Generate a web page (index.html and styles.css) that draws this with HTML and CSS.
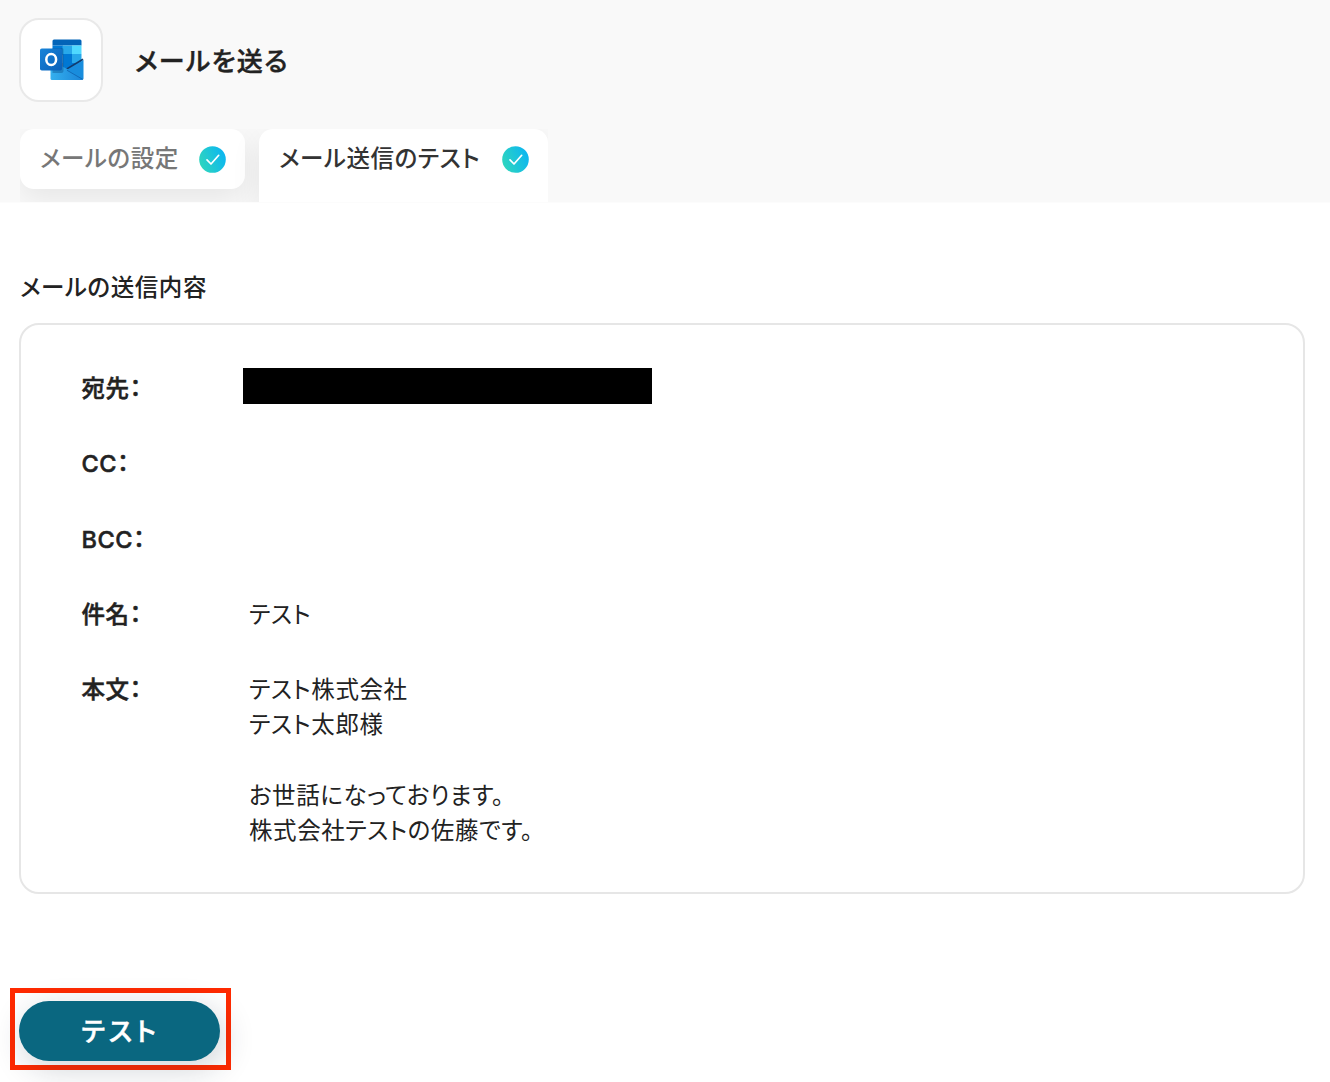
FILE: index.html
```html
<!DOCTYPE html>
<html lang="ja">
<head>
<meta charset="utf-8">
<title>メールを送る</title>
<link rel="stylesheet" href="styles.css">
</head>
<body>
<header class="header">
  <div class="title-row">
    <div class="app-icon">
      <svg width="44" height="42" viewBox="0 0 44 42">
        <defs>
          <linearGradient id="badge" x1="0" y1="0" x2="1" y2="1"><stop offset="0" stop-color="#1784d9"/><stop offset="1" stop-color="#0a5fb8"/></linearGradient>
          <linearGradient id="flap" x1="0" y1="0" x2="1" y2="0"><stop offset="0" stop-color="#35b0ee"/><stop offset="1" stop-color="#1a84d8"/></linearGradient>
          <clipPath id="cover"><path d="M12.5 2a1.5 1.5 0 0 1 1.500-1.500H40a1.500 1.500 0 0 1 1.500 1.500V32H12.500Z"/></clipPath>
        </defs>
        <g clip-path="url(#cover)">
          <path fill="#0364b8" d="M12 0h30v6.500H12z"/>
          <path fill="#0078d4" d="M12 6.500h11v9H12zM22.500 15h9.500v9h-9.500z"/>
          <path fill="#28a8ea" d="M22.500 6.500h9.500V15h-9.500zM32 15h10v9H32z"/>
          <path fill="#50d9ff" d="M32 6.500h10V15H32z"/>
          <path fill="#0364b8" d="M12 15h10.500v9H12z"/>
          <path fill="#0078d4" d="M22.500 24h19v8h-19z"/>
          <path fill="#14447d" d="M12 24h10.500v8H12z"/>
        </g>
        <path fill="#123b6d" d="M42.500 19.500 43.500 21 29 31l-3-1.500Z"/>
        <path fill="url(#flap)" d="M10.500 21.500 43 38v1.500a1.500 1.500 0 0 1-1.500 1.500H12a1.500 1.500 0 0 1-1.500-1.500Z"/>
        <path fill="#198ddd" d="M43.500 21v18.500a1.500 1.500 0 0 1-.5 1.100L26.500 31Z"/>
        <path fill="none" stroke="#0f62ae" stroke-width=".8" d="M27 31.300 43 40.500"/>
        <path fill="#07427a" opacity=".35" d="M12.500 9H22a1.500 1.500 0 0 1 1.500 1.500v21.500a2 2 0 0 1-2 2h-9Z"/>
        <rect y="9.500" width="22" height="22" rx="1.800" fill="url(#badge)"/>
        <ellipse cx="11.200" cy="20.500" rx="4.900" ry="5.500" fill="none" stroke="#fff" stroke-width="2.500"/>
      </svg>
    </div>
    <h1 class="title">メールを送る</h1>
  </div>
  <nav class="tabs">
    <a class="tab tab-idle"><span>メールの設定</span>
      <svg class="check" viewBox="0 0 27 27"><defs><linearGradient id="ok" x1="0" y1=".7" x2="1" y2=".3"><stop offset="0" stop-color="#2fd6bd"/><stop offset="1" stop-color="#0bb5f2"/></linearGradient></defs><circle cx="13.500" cy="13.500" r="13.300" fill="url(#ok)"/><path d="m8 13.800 4 4.200 7.700-8.700" fill="none" stroke="#fff" stroke-width="1.700" stroke-linecap="round" stroke-linejoin="round"/></svg></a>
    <a class="tab tab-active"><span>メール送信のテスト</span>
      <svg class="check" viewBox="0 0 27 27"><circle cx="13.500" cy="13.500" r="13.300" fill="url(#ok)"/><path d="m8 13.800 4 4.200 7.700-8.700" fill="none" stroke="#fff" stroke-width="1.700" stroke-linecap="round" stroke-linejoin="round"/></svg></a>
  </nav>
</header>
<main class="main">
  <h2 class="section-title">メールの送信内容</h2>
  <dl class="card">
    <dt>宛先：</dt><dd><span class="redacted"></span></dd>
    <dt>CC：</dt><dd></dd>
    <dt>BCC：</dt><dd></dd>
    <dt>件名：</dt><dd>テスト</dd>
    <dt>本文：</dt><dd>テスト株式会社<br>テスト太郎様<br><br>お世話になっております。<br>株式会社テストの佐藤です。</dd>
  </dl>
  <div class="highlight"><button class="button">テスト</button></div>
</main>
</body>
</html>
```
FILE: styles.css
```css
* { box-sizing: border-box; }
body {
  margin: 0;
  height: 1082px;
  overflow: hidden;
  background: #fff;
  color: #222;
  font-family: Inter, "Noto Sans CJK JP", sans-serif;
  font-size: 23.5px;
  letter-spacing: .58px;
  font-feature-settings: "palt";
}
h1, h2, dl, dd { margin: 0; }
.header { height: 203px; padding: 18px 20px 0; background: #f9f9f9; border-bottom: 1px solid #fcfcfc; }
.title-row { display: flex; align-items: center; gap: 32px; }
.app-icon {
  width: 84px; height: 84px; margin-left: -1px; padding-left: 1px;
  display: flex; align-items: center; justify-content: center;
  background: #fff; border: 2px solid #e9e9e9; border-radius: 20px;
}
.title { padding-top: 4px; font-size: 26px; font-weight: 500; line-height: 40px; letter-spacing: 1.3px; -webkit-text-stroke: .4px; }
.tabs { display: flex; align-items: flex-start; gap: 14px; width: 528px; height: 73px; margin-top: 27px; overflow: hidden; }
.tab { display: flex; justify-content: space-between; align-items: center; height: 60px; padding: 0 19.500px 0 20px; background: #fff; font-weight: 500; line-height: 60px; box-shadow: 0 10px 30px rgba(0, 0, 0, .08); }
.tab-idle { width: 225px; border-radius: 14px; color: #777; }
.tab-active { width: 289px; height: 74px; padding-bottom: 14px; border-radius: 14px 14px 0 0; color: #333; }
.check { width: 27px; height: 27px; }
.main { padding: 67px 25px 0 19px; }
.section-title { padding-left: 1px; font-size: 23.5px; font-weight: 500; line-height: 36px; }
.card {
  display: grid; grid-template-columns: 168px 1fr; row-gap: 40px;
  height: 571px; margin-top: 17px; padding: 46px 60px 40px;
  border: 2px solid #e6e6e6; border-radius: 20px;
  line-height: 35.25px; align-content: start;
}
dt { padding-left: .4px; font-weight: 500; -webkit-text-stroke: .5px; }
.redacted { display: block; width: 409px; height: 36px; margin: -3px 0 0 -6px; background: #000; }
.highlight { display: flex; width: 221px; height: 82px; margin: 94px 0 0 -9px; padding: 8px 4px; border: 5px solid #ff2a00; }
.button {
  width: 201px; height: 60px; padding: 0 0 4px 2px; border: 0; border-radius: 30px;
  background: #0a6780; color: #fff; font: inherit; font-size: 26px; font-weight: 500; font-feature-settings: "palt";
  letter-spacing: 3.8px; -webkit-text-stroke: .5px; box-shadow: 4px 8px 32px rgba(20, 40, 60, .2);
}
```
